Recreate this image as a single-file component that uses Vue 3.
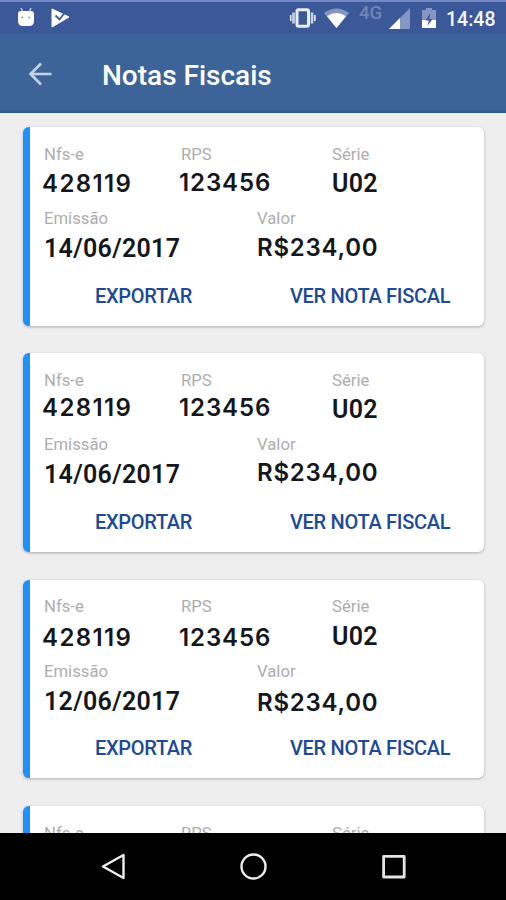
<template>
  <div class="tela">
    <!-- Barra de status -->
    <div class="status">
      <svg class="android" width="18" height="20" viewBox="0 0 18 20">
        <path d="M4 0l2 4M14 0l-2 4" stroke="#c9d3ec" stroke-width="1.4" />
        <path d="M1 6q0-3 3-3h10q3 0 3 3v7q0 5-5 5H6q-5 0-5-5z" fill="#fff" />
        <circle cx="5.2" cy="9.5" r="1.1" fill="#9aa8d0" />
        <circle cx="12.2" cy="9.5" r="1.1" fill="#9aa8d0" />
      </svg>
      <svg class="play" width="19" height="20" viewBox="0 0 19 20">
        <path d="M1 1L18 9 1 19z" fill="#fff" stroke="#fff" stroke-linejoin="round" />
        <path d="M4.5 7.5l4 4L15 3" fill="none" stroke="#3b5998" stroke-width="1.8" />
      </svg>
      <svg class="vibrar" width="28" height="20" viewBox="0 0 28 20">
        <rect x="8" y="1.7" width="11.5" height="16.6" rx="1.5" fill="none" stroke="#e8edf8" stroke-width="3" />
        <path d="M4.5 4.5v11M23 4.5v11" stroke="#c9d3ec" stroke-width="2.6" />
        <path d="M1.7 7v6M25.8 7v6" stroke="#e8edf8" stroke-width="1.6" />
      </svg>
      <svg class="wifi" width="25" height="20" viewBox="0 0 25 20">
        <path d="M0 5Q12.5-4 25 5L12.5 20z" fill="#8596c3" />
        <path d="M3 8.3Q12.5 1.5 22 8.3L12.5 20z" fill="#fff" />
      </svg>
      <span class="rede">4G</span>
      <svg class="sinal" width="21" height="21" viewBox="0 0 21 21">
        <path d="M21 0v21H0z" fill="#8596c3" />
        <path d="M11 10v11H0z" fill="#fff" />
      </svg>
      <svg class="bateria" width="14" height="20" viewBox="0 0 14 20">
        <path d="M4 0h6v2h4v18H0V2h4z" fill="#8596c3" />
        <path d="M0 12h14v8H0z" fill="#fff" />
        <path d="M8.5 5L3.5 12.5h3.3L5.5 18l5-7H7.3z" fill="#3b5998" />
      </svg>
      <span class="hora">14:48</span>
    </div>

    <!-- Cabeçalho -->
    <header class="topo">
      <svg class="voltar" width="24" height="24" viewBox="0 0 24 24" fill="none" stroke="#c6d3e8" stroke-width="2.6">
        <path d="M23.5 12H2.5M13 1.5L2.5 12 13 22.5" />
      </svg>
      <h1>Notas Fiscais</h1>
    </header>

    <!-- Lista de notas -->
    <main class="lista">
      <article v-for="(nota, i) in notas" :key="i" class="nota">
        <div class="linha tres">
          <div>
            <label>Nfs-e</label>
            <strong v-if="nota.nfse" class="numero nfse" :style="{ marginTop: nota.ajuste[0] + 'px' }">{{ nota.nfse }}</strong>
          </div>
          <div>
            <label>RPS</label>
            <strong v-if="nota.rps" class="numero rps" :style="{ marginTop: nota.ajuste[1] + 'px' }">{{ nota.rps }}</strong>
          </div>
          <div>
            <label>Série</label>
            <strong v-if="nota.serie" class="serie" :style="{ marginTop: nota.ajuste[2] + 'px' }">{{ nota.serie }}</strong>
          </div>
        </div>
        <template v-if="nota.emissao">
          <div class="linha duas">
            <div>
              <label>Emissão</label>
              <strong class="data" :style="{ marginTop: nota.ajuste[3] + 'px' }">{{ nota.emissao }}</strong>
            </div>
            <div>
              <label>Valor</label>
              <strong class="numero valor" :style="{ marginTop: nota.ajuste[4] + 'px' }">{{ nota.valor }}</strong>
            </div>
          </div>
          <div class="acoes">
            <button class="exportar">EXPORTAR</button>
            <button class="ver">VER NOTA FISCAL</button>
          </div>
        </template>
      </article>
    </main>

    <!-- Navegação do sistema -->
    <nav class="navegacao">
      <svg width="26" height="28" viewBox="0 0 26 28" fill="none" stroke="#eee" stroke-width="2.4" stroke-linejoin="round">
        <path d="M22.5 2v23L2 13.5z" />
      </svg>
      <svg width="28" height="28" viewBox="0 0 28 28" fill="none" stroke="#eee" stroke-width="2.4">
        <circle cx="13.5" cy="13.5" r="12" />
      </svg>
      <svg width="26" height="28" viewBox="0 0 26 28" fill="none" stroke="#e4e4e4" stroke-width="2.8" stroke-linejoin="round">
        <rect x="2.6" y="3.4" width="20.6" height="20.6" />
      </svg>
    </nav>
  </div>
</template>

<script setup>
import { ref } from 'vue'

// ajuste: distância entre rótulo e valor, na ordem dos campos
const notas = ref([
  { nfse: '428119', rps: '123456', serie: 'U02', emissao: '14/06/2017', valor: 'R$234,00', ajuste: [4, 3, 4, 5, 4] },
  { nfse: '428119', rps: '123456', serie: 'U02', emissao: '14/06/2017', valor: 'R$234,00', ajuste: [2, 2, 4, 5, 3] },
  { nfse: '428119', rps: '123456', serie: 'U02', emissao: '12/06/2017', valor: 'R$234,00', ajuste: [6, 6, 5, 5, 6] },
  {},
])
</script>

<style>
body {
  margin: 0;
}
</style>

<style scoped>
.tela {
  width: 506px;
  height: 900px;
  display: flex;
  flex-direction: column;
  overflow: hidden;
  background: #eeeeee;
  font-family: Roboto, "Liberation Sans", sans-serif;
}

.status {
  height: 34px;
  flex: none;
  box-sizing: border-box;
  border-top: 2px solid #7388c4;
  padding: 0 11px 0 17px;
  display: flex;
  align-items: center;
  background: #3b5998;
}

svg {
  display: block;
  flex: none;
}

.play {
  margin-left: 16px;
}

.vibrar {
  margin-left: auto;
}

.wifi {
  margin-left: 7px;
}

.rede {
  margin-left: 10px;
  margin-top: -10px;
  width: 24px;
  font-size: 18.5px;
  font-weight: 500;
  color: #7286ba;
}

.sinal {
  margin-left: 6px;
}

.bateria {
  margin-left: 12px;
}

.hora {
  margin-left: 10px;
  width: 49px;
  font-size: 19.5px;
  font-weight: 500;
  line-height: 24px;
  margin-top: 3px;
  color: #f5f8ff;
  white-space: nowrap;
}

.topo {
  height: 79px;
  flex: none;
  box-sizing: border-box;
  border-bottom: 2px solid #29598d;
  padding: 3px 0 0 28px;
  display: flex;
  align-items: center;
  background: #3d6498;
}

h1 {
  margin: 3px 0 0 50px;
  font-size: 28px;
  font-weight: 500;
  line-height: 32px;
  color: #fff;
  white-space: nowrap;
}

.lista {
  flex: 1;
  min-height: 0;
  overflow: hidden;
  padding: 14px 22px 0 23px;
}

.nota {
  height: 198.6px;
  margin-bottom: 27.7px;
  box-sizing: border-box;
  border-left: 7px solid #1e90ff;
  border-radius: 6px;
  padding: 17.8px 0 0 14px;
  background: #fff;
  box-shadow: 0 1px 3px rgba(0, 0, 0, 0.28);
}

.linha {
  display: grid;
  height: 64.2px;
}

.tres {
  grid-template-columns: 137px 151px 1fr;
}

.duas {
  grid-template-columns: 213px 1fr;
}

label {
  display: block;
  font-size: 16.7px;
  line-height: 20px;
  color: #adadad;
}

strong {
  display: block;
  line-height: 30px;
  font-size: 25px;
  font-weight: 600;
  letter-spacing: 0.3px;
  color: #14171c;
  white-space: nowrap;
}

.numero {
  font-family: Inter, Roboto, sans-serif;
  font-size: 24px;
  font-weight: 600;
}

.nfse {
  margin-left: -2px;
  letter-spacing: 1.4px;
}

.rps {
  margin-left: -2px;
  letter-spacing: 0.9px;
}

.valor {
  letter-spacing: 0.75px;
}

.acoes {
  display: flex;
  padding: 10.6px 0 0 51px;
}

button {
  border: 0;
  padding: 0;
  background: none;
  font-family: inherit;
  font-size: 20px;
  font-weight: 500;
  letter-spacing: -0.3px;
  line-height: 24px;
  text-align: left;
  color: #1d4a94;
  white-space: nowrap;
}

.exportar {
  width: 195px;
}

.navegacao {
  height: 67px;
  flex: none;
  box-sizing: border-box;
  display: flex;
  align-items: center;
  justify-content: space-between;
  padding: 0 99px 0 101px;
  background: #000;
}
</style>
